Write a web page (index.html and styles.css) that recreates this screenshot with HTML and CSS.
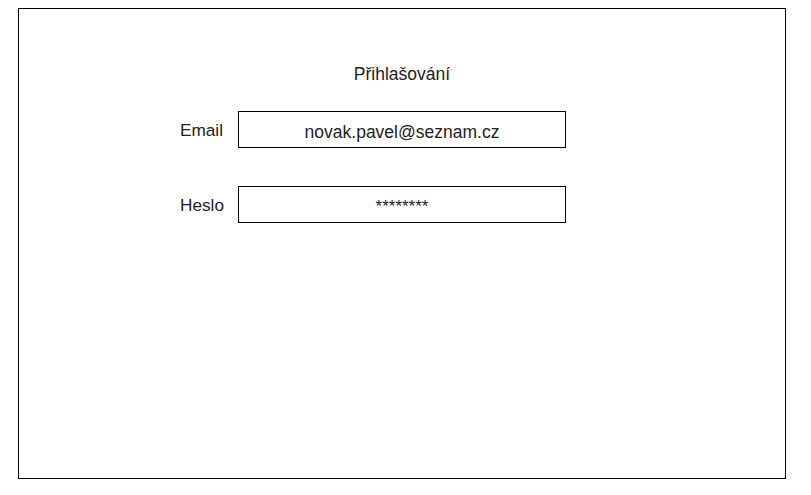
FILE: index.html
```html
<!DOCTYPE html>
<html lang="cs">
<head>
<meta charset="utf-8">
<link rel="stylesheet" href="styles.css">
</head>
<body>
<div class="frame">
  <div class="title">Přihlašování</div>
  <div class="form">
    <div class="row">
      <span class="label">Email</span>
      <div class="field">novak.pavel@seznam.cz</div>
    </div>
    <div class="row">
      <span class="label">Heslo</span>
      <div class="field pwd">********</div>
    </div>
  </div>
</div>
</body>
</html>
```

FILE: styles.css
```css
html, body {
  margin: 0;
  padding: 0;
  background: #ffffff;
}
body {
  font-family: "Liberation Sans", Arial, sans-serif;
  color: #222222;
}
.frame {
  margin: 8px 0 0 18px;
  width: 768px;
  height: 471px;
  box-sizing: border-box;
  border: 1px solid #000000;
  padding-top: 55px;
}
.title {
  text-align: center;
  font-size: 17.5px;
  line-height: 20px;
}
.form {
  margin-top: 27px;
  padding-left: 161px;
  display: flex;
  flex-direction: column;
  gap: 38px;
}
.row {
  display: grid;
  grid-template-columns: 58px 328px;
  align-items: start;
}
.label {
  font-size: 17.2px;
  line-height: 20px;
  padding-top: 9px;
}
.field {
  box-sizing: border-box;
  height: 37px;
  border: 1px solid #000000;
  display: flex;
  align-items: center;
  justify-content: center;
  font-size: 17.5px;
  line-height: 20px;
  padding-top: 5px;
}
.pwd {
  font-size: 17px;
  padding-top: 5px;
}
```
